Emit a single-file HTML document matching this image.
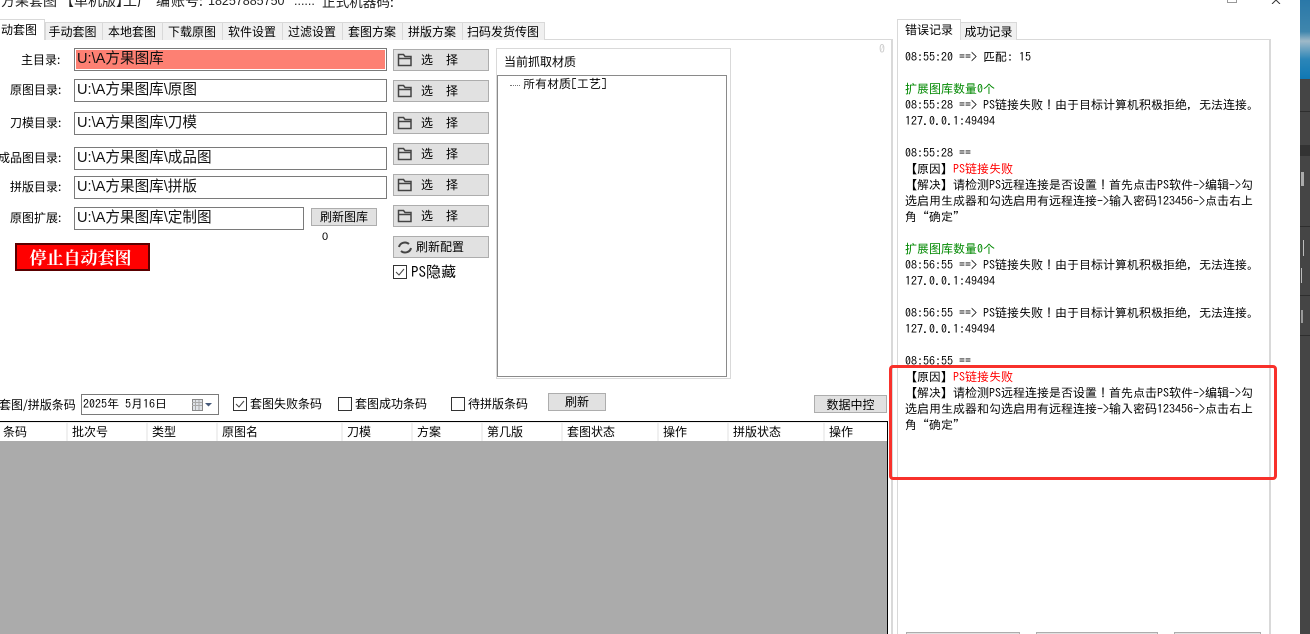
<!DOCTYPE html>
<html><head><meta charset="utf-8"><style>
html,body{margin:0;padding:0;background:#fff}
#p{position:relative;width:1310px;height:634px;overflow:hidden;background:#fff;font:12px/16px "WenQuanYi Zen Hei","Noto Sans CJK SC",sans-serif;color:#000}
.a,.t,.in,.b,.tab,.cb,.sep{position:absolute;box-sizing:border-box}
.t{white-space:nowrap}
.m{font-family:IPAGothic,"WenQuanYi Zen Hei",monospace}
.br{font-family:"Noto Sans CJK SC",sans-serif;font-weight:700}
.in{left:74px;width:313px;height:23px;border:1px solid #7a7a7a;background:#fff;font:14.6px/20px "Liberation Sans","Noto Sans CJK SC",sans-serif;padding-left:2px;white-space:nowrap;color:#111}
.b{background:#e1e1e1;border:1px solid #adadad;text-align:center;white-space:nowrap}
.s{left:393px;width:96px;height:22px}
.s svg{position:absolute;left:3px;top:3px}
.s i{position:absolute;font-style:normal;top:2px}
.tab{background:#f0f0f0;border:1px solid #d9d9d9;border-bottom:0;top:22px;height:18px;text-align:center;line-height:17px;white-space:nowrap;padding-right:1px}
.sep{top:423px;width:2px;height:18px;background:#f0f0f0}
.cb{width:14px;height:14px;border:1px solid #333;background:#fff}
.r{color:#f00}.g{color:#080}
.ti{top:-7px;font-size:14px;color:#222}
</style></head><body><div id="p">
<div class="t ti" style="left:1px">方果套图</div>
<div class="t ti" style="left:60px"><span class="br" style="font-weight:400">【单机版】</span></div>
<div class="t ti" style="left:123px">工厂</div>
<div class="t ti" style="left:156px">编</div>
<div class="t ti" style="left:171px">账号:</div>
<div class="t ti" style="left:208px;font:12.500px/16px 'Liberation Sans',sans-serif">18257885750</div>
<div class="t ti" style="left:294px;font:12.500px/16px 'Liberation Sans',sans-serif">......</div>
<div class="t ti" style="left:322px;font-size:13.600px">正式机器码:</div>
<div class="a" style="left:1227px;top:-6px;width:10px;height:9px;border:1px solid #999"></div>
<svg class="a" style="left:1270px;top:0" width="14" height="4"><path d="M2 4 L6 0 M10 4 L6 0" stroke="#333" fill="none"/></svg>

<!-- main pane -->
<div class="a" style="left:-2px;top:39px;width:895px;height:600px;border:1px solid #d9d9d9;border-width:1px 2px 0 0"></div>
<div class="tab" style="left:45px;width:58px;padding-right:3px">手动套图</div>
<div class="tab" style="left:102px;width:61px">本地套图</div>
<div class="tab" style="left:162px;width:61px">下载原图</div>
<div class="tab" style="left:222px;width:61px">软件设置</div>
<div class="tab" style="left:282px;width:61px">过滤设置</div>
<div class="tab" style="left:342px;width:61px">套图方案</div>
<div class="tab" style="left:402px;width:61px">拼版方案</div>
<div class="tab" style="left:462px;width:83px">扫码发货传图</div>
<div class="tab" style="left:-12px;width:57px;top:19px;height:21px;background:#fff;line-height:20px;padding-left:1px;text-align:right;padding-right:7px">动套图</div>

<div class="t" style="left:21px;top:52px">主目录:</div>
<div class="t" style="left:10px;top:82px">原图目录:</div>
<div class="t" style="left:10px;top:115px">刀模目录:</div>
<div class="t" style="left:-2px;top:150px">成品图目录:</div>
<div class="t" style="left:10px;top:179px">拼版目录:</div>
<div class="t" style="left:10px;top:210px">原图扩展:</div>

<div class="in" style="top:48px;background:#fd8073;box-shadow:inset 0 0 0 1px #fff">U:\A方果图库</div>
<div class="in" style="top:79px">U:\A方果图库\原图</div>
<div class="in" style="top:112px">U:\A方果图库\刀模</div>
<div class="in" style="top:147px">U:\A方果图库\成品图</div>
<div class="in" style="top:176px">U:\A方果图库\拼版</div>
<div class="in" style="top:207px;width:230px">U:\A方果图库\定制图</div>

<div class="b s" style="top:49px"><svg width="16" height="15"><path d="M1.5 12.500V1.500h5l1.500 2h6v9zM2 5.500h12" fill="none" stroke="#444" stroke-width="1.500"/></svg><i style="left:27px">选</i><i style="left:52px">择</i></div>
<div class="b s" style="top:80px"><svg width="16" height="15"><path d="M1.5 12.500V1.500h5l1.500 2h6v9zM2 5.500h12" fill="none" stroke="#444" stroke-width="1.500"/></svg><i style="left:27px">选</i><i style="left:52px">择</i></div>
<div class="b s" style="top:112px"><svg width="16" height="15"><path d="M1.5 12.500V1.500h5l1.500 2h6v9zM2 5.500h12" fill="none" stroke="#444" stroke-width="1.500"/></svg><i style="left:27px">选</i><i style="left:52px">择</i></div>
<div class="b s" style="top:143px"><svg width="16" height="15"><path d="M1.5 12.500V1.500h5l1.500 2h6v9zM2 5.500h12" fill="none" stroke="#444" stroke-width="1.500"/></svg><i style="left:27px">选</i><i style="left:52px">择</i></div>
<div class="b s" style="top:174px"><svg width="16" height="15"><path d="M1.5 12.500V1.500h5l1.500 2h6v9zM2 5.500h12" fill="none" stroke="#444" stroke-width="1.500"/></svg><i style="left:27px">选</i><i style="left:52px">择</i></div>
<div class="b s" style="top:205px"><svg width="16" height="15"><path d="M1.5 12.500V1.500h5l1.500 2h6v9zM2 5.500h12" fill="none" stroke="#444" stroke-width="1.500"/></svg><i style="left:27px">选</i><i style="left:52px">择</i></div>
<div class="b s" style="top:236px"><svg width="16" height="15"><path d="M2 7a6 5.500 0 0 1 10-3M14 8a6 5.500 0 0 1-10 3" fill="none" stroke="#444" stroke-width="2"/></svg><i style="left:22px">刷新配置</i></div>

<div class="b" style="left:311px;top:208px;width:66px;height:18px;line-height:16px">刷新图库</div>
<div class="t" style="left:322px;top:229px;font-family:'Liberation Sans',sans-serif;font-size:11px">0</div>
<div class="a" style="left:15px;top:243px;width:135px;height:28px;background:#f00;border:2px solid #5a0000;color:#fff;font:bold 17px/24px 'Noto Serif CJK SC','Noto Sans CJK SC',serif;text-align:center;white-space:nowrap;padding-right:4px">停止自动套图</div>

<div class="cb" style="left:393px;top:265px"><svg style="position:absolute;left:0;top:0" width="12" height="12"><path d="M2 6l3 3 5-6" fill="none" stroke="#444"/></svg></div>
<div class="t m" style="left:411px;top:264px;font-size:15px">PS隐藏</div>

<div class="a" style="left:496px;top:48px;width:235px;height:331px;border:1px solid #d9d9d9"></div>
<div class="t" style="left:504px;top:54px">当前抓取材质</div>
<div class="a" style="left:497px;top:75px;width:230px;height:302px;border:1px solid #8a8a8a;background:#fff"></div>
<div class="a" style="left:510px;top:85px;width:10px;border-top:1px dotted #777"></div>
<div class="t m" style="left:523px;top:76px">所有材质[工艺]</div>
<div class="t m" style="left:879px;top:41px;color:#ccc">0</div>

<div class="t" style="left:-1px;top:397px">套图/拼版条码</div>
<div class="a m" style="left:81px;top:394px;width:138px;height:21px;border:1px solid #7a7a7a;padding-left:1px;line-height:19px;white-space:nowrap">2025年 5月16日
<svg style="position:absolute;left:110px;top:3px" width="26" height="14"><rect x="0.500" y="1.500" width="10" height="11" fill="#dfe3e8" stroke="#888"/><path d="M0 4.500h10M0 7.500h10M3.500 2v10M7 2v10" stroke="#aaa" fill="none"/><path d="M13 5h7l-3.500 3.500z" fill="#46597a"/></svg></div>
<div class="cb" style="left:233px;top:397px"><svg style="position:absolute;left:0;top:0" width="12" height="12"><path d="M2 6l3 3 5-6" fill="none" stroke="#444"/></svg></div>
<div class="t" style="left:250px;top:396px">套图失败条码</div>
<div class="cb" style="left:338px;top:397px"></div>
<div class="t" style="left:355px;top:396px">套图成功条码</div>
<div class="cb" style="left:451px;top:397px"></div>
<div class="t" style="left:468px;top:396px">待拼版条码</div>
<div class="b" style="left:548px;top:393px;width:58px;height:18px;line-height:16px">刷新</div>
<div class="b" style="left:814px;top:395px;width:73px;height:18px;line-height:17px">数据中控</div>

<!-- table -->
<div class="a" style="left:-2px;top:421px;width:890px;height:220px;border:1px solid #000;border-width:1px 1px 0 0;background:#ababab"></div>
<div class="a" style="left:0;top:422px;width:887px;height:19px;background:#fff;border-top:1px solid #eee"></div>
<div class="sep" style="left:66px"></div><div class="sep" style="left:146px"></div><div class="sep" style="left:216px"></div><div class="sep" style="left:341px"></div><div class="sep" style="left:411px"></div><div class="sep" style="left:481px"></div><div class="sep" style="left:561px"></div><div class="sep" style="left:657px"></div><div class="sep" style="left:727px"></div><div class="sep" style="left:823px"></div>
<div class="t" style="left:3px;top:424px">条码</div><div class="t" style="left:72px;top:424px">批次号</div><div class="t" style="left:152px;top:424px">类型</div><div class="t" style="left:222px;top:424px">原图名</div><div class="t" style="left:347px;top:424px">刀模</div><div class="t" style="left:417px;top:424px">方案</div><div class="t" style="left:487px;top:424px">第几版</div><div class="t" style="left:567px;top:424px">套图状态</div><div class="t" style="left:663px;top:424px">操作</div><div class="t" style="left:733px;top:424px">拼版状态</div><div class="t" style="left:829px;top:424px">操作</div>

<!-- right pane -->
<div class="a" style="left:897px;top:39px;width:374px;height:600px;border:1px solid #d9d9d9;border-right-width:2px;border-bottom:0"></div>
<div class="tab" style="left:960px;width:57px;padding-right:0">成功记录</div>
<div class="tab" style="left:897px;width:64px;top:19px;height:21px;background:#fff;line-height:20px;padding-right:0">错误记录</div>
<div class="a m" style="left:905px;top:0;width:360px">
<div class="t" style="top:49px">08:55:20 ==> 匹配: 15</div>
<div class="t g" style="top:81px">扩展图库数量0个</div>
<div class="t" style="top:97px">08:55:28 ==> PS链接失败！由于目标计算机积极拒绝，无法连接。</div>
<div class="t" style="top:113px">127.0.0.1:49494</div>
<div class="t" style="top:145px">08:55:28 ==</div>
<div class="t" style="top:161px"><span class="br">【</span>原因<span class="br">】</span><span class="r">PS链接失败</span></div>
<div class="t" style="top:177px"><span class="br">【</span>解决<span class="br">】</span>请检测PS远程连接是否设置！首先点击PS软件->编辑->勾</div>
<div class="t" style="top:193px">选启用生成器和勾选启用有远程连接->输入密码123456->点击右上</div>
<div class="t" style="top:209px">角“确定”</div>
<div class="t g" style="top:241px">扩展图库数量0个</div>
<div class="t" style="top:257px">08:56:55 ==> PS链接失败！由于目标计算机积极拒绝，无法连接。</div>
<div class="t" style="top:273px">127.0.0.1:49494</div>
<div class="t" style="top:305px">08:56:55 ==> PS链接失败！由于目标计算机积极拒绝，无法连接。</div>
<div class="t" style="top:321px">127.0.0.1:49494</div>
<div class="t" style="top:353px">08:56:55 ==</div>
<div class="t" style="top:369px"><span class="br">【</span>原因<span class="br">】</span><span class="r">PS链接失败</span></div>
<div class="t" style="top:385px"><span class="br">【</span>解决<span class="br">】</span>请检测PS远程连接是否设置！首先点击PS软件->编辑->勾</div>
<div class="t" style="top:401px">选启用生成器和勾选启用有远程连接->输入密码123456->点击右上</div>
<div class="t" style="top:417px">角“确定”</div>
</div>
<div class="b" style="left:906px;top:632px;width:114px;height:10px"></div>
<div class="b" style="left:1036px;top:632px;width:122px;height:10px"></div>
<div class="b" style="left:1174px;top:632px;width:87px;height:10px"></div>

<!-- red highlight -->
<div class="a" style="left:889px;top:365px;width:388px;height:115px;border:3px solid #f8312b;border-radius:4px"></div>

<!-- right strip -->
<div class="a" style="left:1300px;top:0;width:10px;height:634px;background:#454545"></div>
<div class="a" style="left:1300px;top:0;width:10px;height:79px;background:linear-gradient(180deg,#2a78a8 0%,#3f86ad 40%,#9fb9c8 52%,#2c86b8 75%,#0f78b4 100%)"></div>
<div class="a" style="left:1300px;top:111px;width:10px;height:1px;background:#2e2e2e"></div>
<div class="a" style="left:1300px;top:145px;width:10px;height:11px;background:#333"></div>
<div class="a" style="left:1300px;top:226px;width:10px;height:1px;background:#2e2e2e"></div>
<div class="a" style="left:1300px;top:295px;width:10px;height:1px;background:#2e2e2e"></div>
<div class="a" style="left:1300px;top:335px;width:10px;height:1px;background:#2e2e2e"></div>
<div class="a" style="left:1301px;top:172px;width:3px;height:14px;background:#aaa"></div>
<div class="a" style="left:1303px;top:240px;width:1px;height:16px;background:#bbb"></div>
<div class="a" style="left:1301px;top:268px;width:1px;height:15px;background:#bbb"></div>
<div class="a" style="left:1301px;top:310px;width:2px;height:13px;background:#999"></div>
</div></body></html>
